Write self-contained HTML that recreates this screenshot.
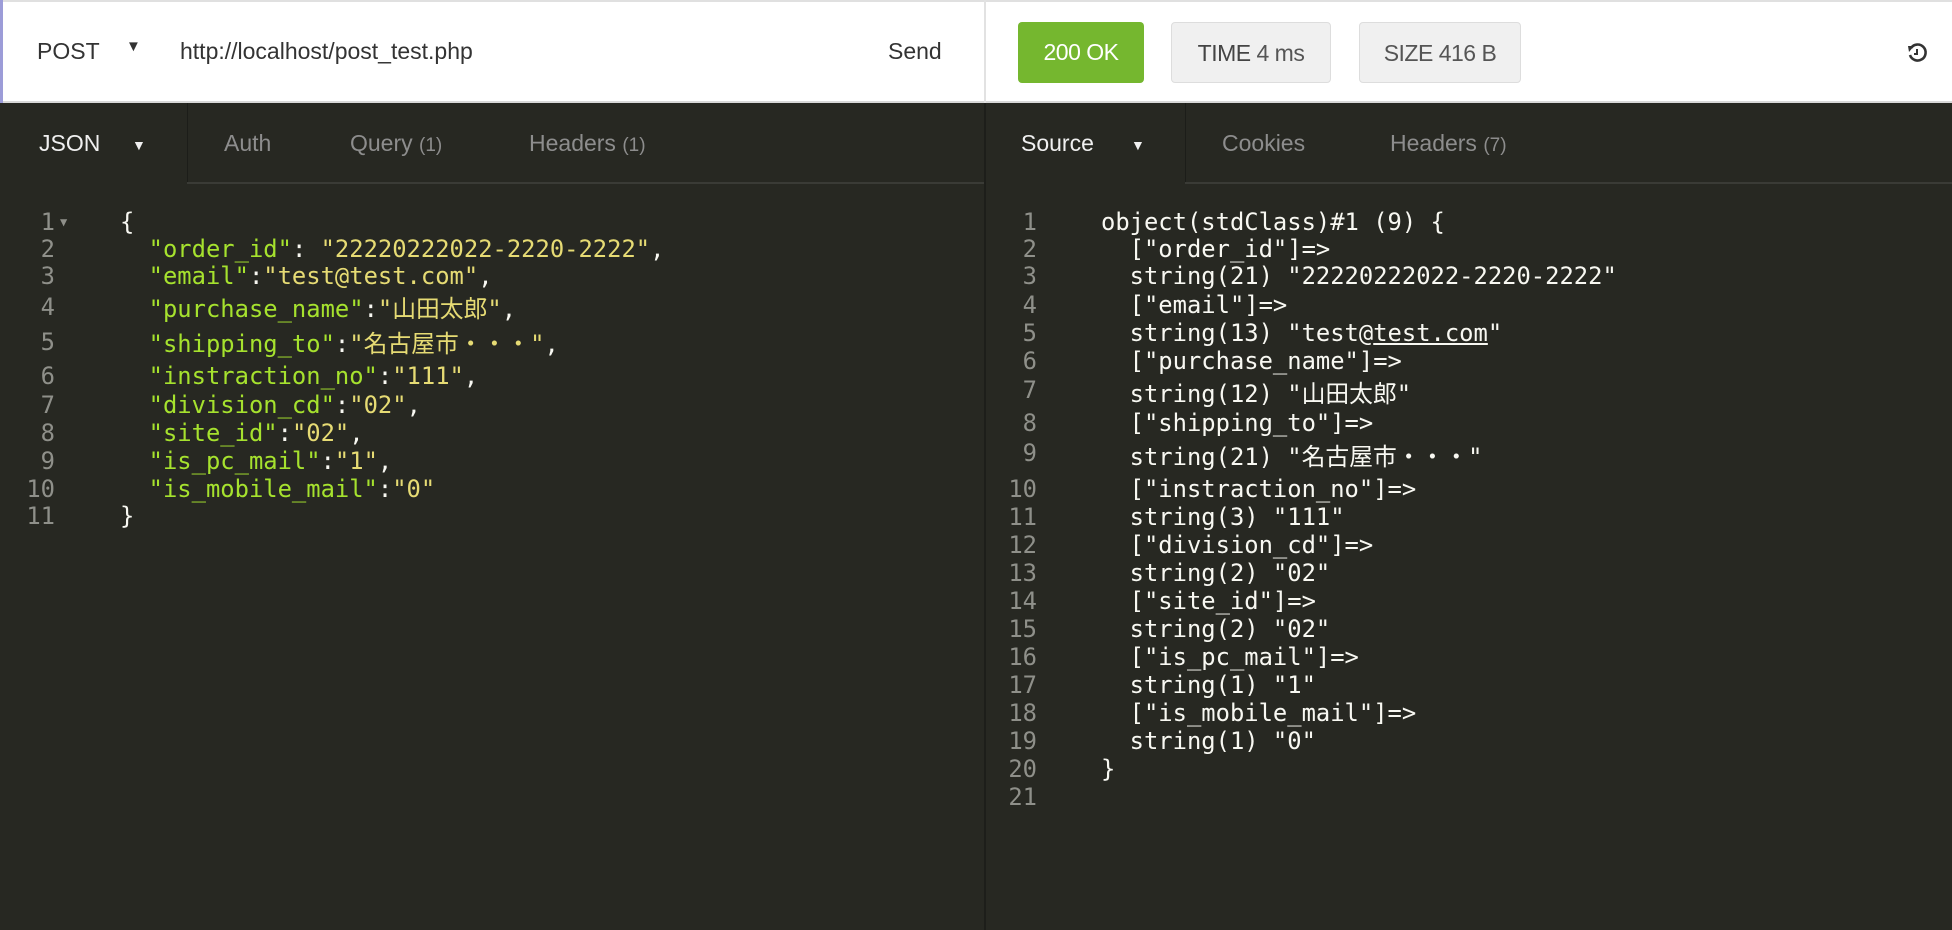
<!DOCTYPE html>
<html><head><meta charset="utf-8"><style>
*{margin:0;padding:0;box-sizing:border-box}
body{width:1952px;height:930px;overflow:hidden;background:#272822;position:relative;font-family:"Liberation Sans","Noto Sans CJK JP",sans-serif}
.top{position:absolute;left:0;top:0;width:1952px;height:103px;background:#fff;border-bottom:2px solid #d8d8d8;border-top:2px solid #e0e0e0}
.a{position:absolute;white-space:pre}
.ui{font-size:23px;color:#333}
.btn{position:absolute;top:22px;height:61px;border-radius:4px;font-size:23px;line-height:61px;text-align:center;letter-spacing:-0.5px}
.tab{font-size:23px;color:#8d8d8d;top:130px}
.code{font-family:"DejaVu Sans Mono","Noto Sans CJK JP",monospace;font-size:23.8px;line-height:28px;color:#f8f8f2}
.n{color:#8f908a;text-align:right;width:40px}
.k{color:#a6e22e}.s{color:#e6db74}
</style></head><body>
<div class="top"></div>
<div class="a" style="left:0;top:0;width:3px;height:103px;background:#9c9cd8"></div>
<div class="a" style="left:984px;top:0;width:2px;height:930px;background:#1d1e1a"></div>
<div class="a" style="left:984px;top:0;width:2px;height:103px;background:#e2e2e2"></div>
<div class="a ui" style="left:37px;top:38px">POST</div>
<div class="a ui" style="left:126px;top:38px;font-size:15px">▼</div>
<div class="a ui" style="left:180px;top:38px">http://localhost/post_test.php</div>
<div class="a ui" style="left:888px;top:38px">Send</div>
<div class="btn" style="left:1018px;width:126px;background:#75b72f;color:#fff">200 OK</div>
<div class="btn" style="left:1171px;width:160px;background:#f0f0f0;border:1px solid #ddd;color:#555"><b style="font-weight:normal;color:#444">TIME</b> 4 ms</div>
<div class="btn" style="left:1359px;width:162px;background:#f0f0f0;border:1px solid #ddd;color:#555">SIZE 416 B</div>
<svg class="a" style="left:1906px;top:42px" width="22" height="22" viewBox="0 0 22 22"><path d="M5 6 A8 8 0 1 1 4 13" fill="none" stroke="#333" stroke-width="2.6"/><path d="M2 4 L8 4 L3 10 Z" fill="#333"/><path d="M11 7 V12 H8" fill="none" stroke="#333" stroke-width="2"/></svg>
<!-- tabs -->
<div class="a" style="left:187px;top:103px;width:1px;height:80px;background:#1c1d19"></div>
<div class="a" style="left:187px;top:182px;width:797px;height:2px;background:#3a3b36"></div>
<div class="a" style="left:1185px;top:103px;width:1px;height:80px;background:#1c1d19"></div>
<div class="a" style="left:1185px;top:182px;width:767px;height:2px;background:#3a3b36"></div>
<div class="a tab" style="left:39px;color:#f0f0f0">JSON</div>
<div class="a tab" style="left:132px;color:#f0f0f0;font-size:14px;top:137px">▼</div>
<div class="a tab" style="left:224px">Auth</div>
<div class="a tab" style="left:350px">Query <span style="font-size:19px">(1)</span></div>
<div class="a tab" style="left:529px">Headers <span style="font-size:19px">(1)</span></div>
<div class="a tab" style="left:1021px;color:#f0f0f0">Source</div>
<div class="a tab" style="left:1131px;color:#f0f0f0;font-size:14px;top:137px">▼</div>
<div class="a tab" style="left:1222px">Cookies</div>
<div class="a tab" style="left:1390px">Headers <span style="font-size:19px">(7)</span></div>
<!-- left code -->
<div class="code">
<div class="a n" style="left:15px;top:208px">1</div><div class="a" style="left:60px;top:208px;color:#8f908a;font-size:12px">▼</div><div class="a" style="left:120px;top:208px">{</div>
<div class="a n" style="left:15px;top:235px">2</div><div class="a" style="left:120px;top:235px">  <span class="k">"order_id"</span>: <span class="s">"22220222022-2220-2222"</span>,</div>
<div class="a n" style="left:15px;top:262px">3</div><div class="a" style="left:120px;top:262px">  <span class="k">"email"</span>:<span class="s">"test@test.com"</span>,</div>
<div class="a n" style="left:15px;top:293px">4</div><div class="a" style="left:120px;top:295px">  <span class="k">"purchase_name"</span>:<span class="s">"山田太郎"</span>,</div>
<div class="a n" style="left:15px;top:328px">5</div><div class="a" style="left:120px;top:330px">  <span class="k">"shipping_to"</span>:<span class="s">"名古屋市・・・"</span>,</div>
<div class="a n" style="left:15px;top:362px">6</div><div class="a" style="left:120px;top:362px">  <span class="k">"instraction_no"</span>:<span class="s">"111"</span>,</div>
<div class="a n" style="left:15px;top:391px">7</div><div class="a" style="left:120px;top:391px">  <span class="k">"division_cd"</span>:<span class="s">"02"</span>,</div>
<div class="a n" style="left:15px;top:419px">8</div><div class="a" style="left:120px;top:419px">  <span class="k">"site_id"</span>:<span class="s">"02"</span>,</div>
<div class="a n" style="left:15px;top:447px">9</div><div class="a" style="left:120px;top:447px">  <span class="k">"is_pc_mail"</span>:<span class="s">"1"</span>,</div>
<div class="a n" style="left:15px;top:475px">10</div><div class="a" style="left:120px;top:475px">  <span class="k">"is_mobile_mail"</span>:<span class="s">"0"</span></div>
<div class="a n" style="left:15px;top:502px">11</div><div class="a" style="left:120px;top:502px">}</div>
</div>
<!-- right code -->
<div class="code">
<div class="a n" style="left:997px;top:208px">1</div><div class="a" style="left:1101px;top:208px">object(stdClass)#1 (9) {</div>
<div class="a n" style="left:997px;top:235px">2</div><div class="a" style="left:1101px;top:235px">  ["order_id"]=&gt;</div>
<div class="a n" style="left:997px;top:262px">3</div><div class="a" style="left:1101px;top:262px">  string(21) "22220222022-2220-2222"</div>
<div class="a n" style="left:997px;top:291px">4</div><div class="a" style="left:1101px;top:291px">  ["email"]=&gt;</div>
<div class="a n" style="left:997px;top:319px">5</div><div class="a" style="left:1101px;top:319px">  string(13) "test@<u>test.com</u>"</div>
<div class="a n" style="left:997px;top:347px">6</div><div class="a" style="left:1101px;top:347px">  ["purchase_name"]=&gt;</div>
<div class="a n" style="left:997px;top:376px">7</div><div class="a" style="left:1101px;top:380px">  string(12) "山田太郎"</div>
<div class="a n" style="left:997px;top:409px">8</div><div class="a" style="left:1101px;top:409px">  ["shipping_to"]=&gt;</div>
<div class="a n" style="left:997px;top:439px">9</div><div class="a" style="left:1101px;top:443px">  string(21) "名古屋市・・・"</div>
<div class="a n" style="left:997px;top:475px">10</div><div class="a" style="left:1101px;top:475px">  ["instraction_no"]=&gt;</div>
<div class="a n" style="left:997px;top:503px">11</div><div class="a" style="left:1101px;top:503px">  string(3) "111"</div>
<div class="a n" style="left:997px;top:531px">12</div><div class="a" style="left:1101px;top:531px">  ["division_cd"]=&gt;</div>
<div class="a n" style="left:997px;top:559px">13</div><div class="a" style="left:1101px;top:559px">  string(2) "02"</div>
<div class="a n" style="left:997px;top:587px">14</div><div class="a" style="left:1101px;top:587px">  ["site_id"]=&gt;</div>
<div class="a n" style="left:997px;top:615px">15</div><div class="a" style="left:1101px;top:615px">  string(2) "02"</div>
<div class="a n" style="left:997px;top:643px">16</div><div class="a" style="left:1101px;top:643px">  ["is_pc_mail"]=&gt;</div>
<div class="a n" style="left:997px;top:671px">17</div><div class="a" style="left:1101px;top:671px">  string(1) "1"</div>
<div class="a n" style="left:997px;top:699px">18</div><div class="a" style="left:1101px;top:699px">  ["is_mobile_mail"]=&gt;</div>
<div class="a n" style="left:997px;top:727px">19</div><div class="a" style="left:1101px;top:727px">  string(1) "0"</div>
<div class="a n" style="left:997px;top:755px">20</div><div class="a" style="left:1101px;top:755px">}</div>
<div class="a n" style="left:997px;top:783px">21</div>
</div>
</body></html>
